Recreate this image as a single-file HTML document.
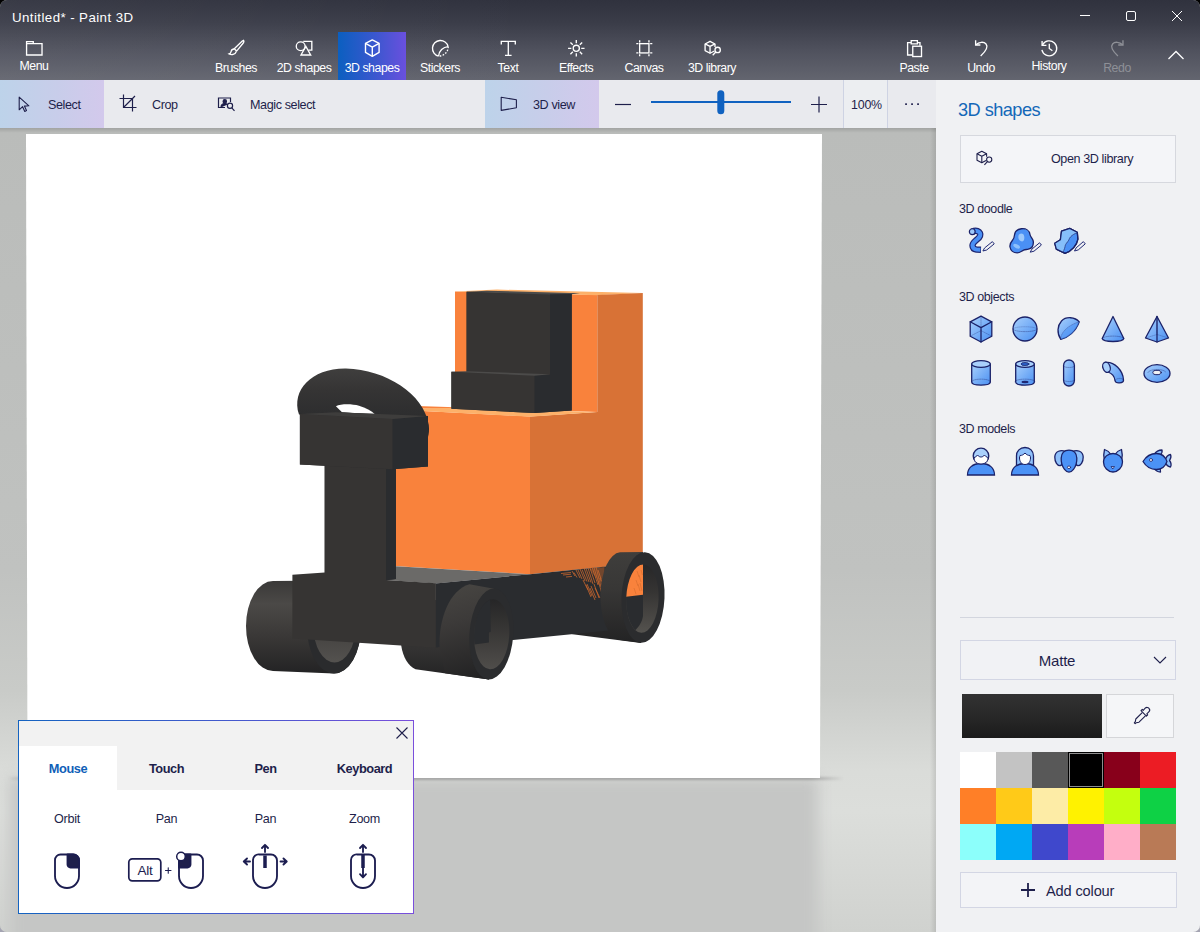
<!DOCTYPE html>
<html>
<head>
<meta charset="utf-8">
<title>Paint 3D</title>
<style>
*{box-sizing:border-box;margin:0;padding:0}
html,body{width:1200px;height:932px;overflow:hidden;background:linear-gradient(180deg,#000 50%,#a4a4b2 50%);font-family:"Liberation Sans",sans-serif;}
#app{position:absolute;left:0;top:0;width:1200px;height:932px;overflow:hidden;background:#b9bbb9;border-radius:7px}
.abs{position:absolute}
/* header */
#hdr{position:absolute;left:0;top:0;width:1200px;height:80px;background:linear-gradient(90deg,rgba(255,255,255,.045) 0%,rgba(255,255,255,0) 45%),linear-gradient(180deg,#30323e 0%,#3a3c48 28%,#50525e 64%,#63656f 100%);}
#title{position:absolute;left:12px;top:9.600px;font-size:13.3px;color:#fff;letter-spacing:.42px;white-space:nowrap}
.tb{position:absolute;top:32px;width:68px;height:48px;color:#fff;text-align:center}
.tb .lb{position:absolute;left:-10px;right:-10px;top:28px;font-size:12.3px;letter-spacing:-0.45px;line-height:16px;white-space:nowrap;text-align:center}
.tb svg{position:absolute;left:23.700px;top:5.600px;width:20.600px;height:20.600px;overflow:visible}
.tb.act{background:linear-gradient(90deg,#0b5fc0 0%,#3b57cf 55%,#6a50de 100%)}
.tb.dis{color:#8e9097}
/* sub toolbar */
#sub{position:absolute;left:0;top:80px;width:936px;height:48px;background:#e9eaee}
.sb{position:absolute;top:0;height:48px;font-size:12.6px;letter-spacing:-0.4px;color:#1e1f4b;white-space:nowrap}
.sel{background:linear-gradient(90deg,#bdd3ea 0%,#c8cdea 55%,#d3c9ec 100%)}
.sb span{position:absolute;top:17px;line-height:16px}
/* right panel */
#rp{position:absolute;left:936px;top:80px;width:264px;height:852px;background:#f0f1f3}
.sec{position:absolute;left:23px;font-size:12.5px;color:#1e1f4b;white-space:nowrap}
.pt{position:absolute;top:39px;line-height:18px;font-size:12.8px;font-weight:bold;letter-spacing:-0.45px;text-align:center;color:#1e1f4b;white-space:nowrap}
.ps{position:absolute;top:89px;line-height:18px;font-size:12.6px;letter-spacing:-0.3px;text-align:center;color:#1e1f4b;white-space:nowrap}
</style>
</head>
<body>
<div id="app">

<!-- WORKSPACE -->
<div id="ws" class="abs" style="left:0;top:128px;width:936px;height:804px;background:linear-gradient(180deg,#babcba 0%,#bdbfbd 30%,#c0c2c0 55%,#c9cbc8 70%,#dadcd9 80%,#dcdedb 85%,#d0d2cf 100%)"></div>
<div class="abs" style="left:0;top:128px;width:936px;height:5px;background:linear-gradient(180deg,rgba(0,0,0,.13),rgba(0,0,0,0))"></div>
<div class="abs" style="left:930px;top:128px;width:6px;height:804px;background:linear-gradient(90deg,rgba(0,0,0,0),rgba(0,0,0,.10))"></div>


<!-- CANVAS -->
<div class="abs" style="left:10px;top:778px;width:808px;height:170px;background:#c5c6c5;filter:blur(7px)"></div>
<div class="abs" style="left:8px;top:777px;width:836px;height:3px;background:linear-gradient(90deg,rgba(150,150,150,0) 0%,rgba(150,150,150,.8) 3%,rgba(150,150,150,.8) 96%,rgba(150,150,150,0) 100%);filter:blur(.8px)"></div>
<svg class="abs" style="left:0;top:128px;width:936px;height:804px" viewBox="0 128 936 804"><polygon points="26,134 822,134 820,778 27.500,778" fill="#ffffff"/></svg>
<svg class="abs" style="left:0;top:128px;width:936px;height:804px" viewBox="0 128 936 804">
<defs>
<linearGradient id="w1" x1="0" y1="581" x2="0" y2="673" gradientUnits="userSpaceOnUse"><stop offset="0" stop-color="#3a3938"/><stop offset=".25" stop-color="#4b4947"/><stop offset=".6" stop-color="#3a3837"/><stop offset="1" stop-color="#232324"/></linearGradient>
<linearGradient id="w2" x1="0" y1="585" x2="0" y2="680" gradientUnits="userSpaceOnUse"><stop offset="0" stop-color="#3f3e3c"/><stop offset=".3" stop-color="#403e3d"/><stop offset=".7" stop-color="#323131"/><stop offset="1" stop-color="#222223"/></linearGradient>
<linearGradient id="w3" x1="0" y1="552" x2="0" y2="643" gradientUnits="userSpaceOnUse"><stop offset="0" stop-color="#3f3e3c"/><stop offset=".4" stop-color="#383736"/><stop offset="1" stop-color="#232324"/></linearGradient>
<linearGradient id="hub" x1="0" y1="0" x2="0" y2="1"><stop offset="0" stop-color="#2c2c2d"/><stop offset=".6" stop-color="#454341"/><stop offset="1" stop-color="#54524f"/></linearGradient>
<linearGradient id="w2b" x1="450" y1="590" x2="475" y2="680" gradientUnits="userSpaceOnUse"><stop offset="0" stop-color="#464441"/><stop offset=".35" stop-color="#3c3a39"/><stop offset=".7" stop-color="#2e2d2d"/><stop offset="1" stop-color="#222223"/></linearGradient>
<linearGradient id="hub2" x1="0" y1="599" x2="0" y2="670" gradientUnits="userSpaceOnUse"><stop offset="0" stop-color="#262627"/><stop offset=".35" stop-color="#343332"/><stop offset=".75" stop-color="#454341"/><stop offset="1" stop-color="#504e4b"/></linearGradient>
<linearGradient id="hub3" x1="0" y1="564" x2="0" y2="633" gradientUnits="userSpaceOnUse"><stop offset="0" stop-color="#272728"/><stop offset=".4" stop-color="#353433"/><stop offset=".8" stop-color="#4a4845"/><stop offset="1" stop-color="#55534f"/></linearGradient>
<linearGradient id="arc" x1="0" y1="368" x2="0" y2="432" gradientUnits="userSpaceOnUse"><stop offset="0" stop-color="#403f3e"/><stop offset=".35" stop-color="#353434"/><stop offset="1" stop-color="#28292b"/></linearGradient>
</defs>
<!-- orange blocks -->
<polygon points="385,405 597.300,412 597.300,295 455,291.500 455,409 420,408.500 385,410" fill="#f9823c"/>
<polygon points="455,291.400 497,289.600 642.800,293 597.300,295.200" fill="#fdb16a"/>
<polygon points="597.300,295 642.800,293 642.800,563 530,574.200 530,416.500 597.300,412" fill="#d87236"/>
<polygon points="385,409 530,416.500 530,574.200 385,565.500" fill="#f9823c"/>
<polygon points="418,408.400 455,407.800 597.300,412 530,416.700 418,410.800" fill="#fdb16a"/>
<!-- seat -->
<polygon points="466.600,291.700 571.700,294 571.700,410.500 534.400,413 451.400,408.700 451.400,371.800 466.600,372" fill="#303031"/>
<polygon points="466.600,291.700 550,294.300 550,376 466.600,373" fill="#363433"/>
<polygon points="466.600,291.700 487,290.700 580,293.300 571.700,294.200 550,294.600" fill="#4a4a4a"/>
<polygon points="550,294.400 571.700,294 571.700,410.500 534.400,413 534.400,375.300 550,374.800" fill="#2a2c2f"/>
<polygon points="451.400,371.800 534.400,375.300 534.400,413 451.400,408.700" fill="#363433"/>
<polygon points="451.400,371.800 466.600,371.300 550,374.300 534.400,375.700" fill="#4c4b4a"/>
<!-- base -->
<polygon points="395.800,566.300 530,574.200 436,583.400 386,580" fill="#6b6a68"/>
<!-- wheel 2 under-base body -->
<path d="M400.800 640 L401.300 646 C403 657 408 666 415.500 669.200 L488.900 679.500 L488.900 600 L400.800 600z" fill="url(#w2)"/>
<!-- wheel 3 under-base body -->
<path d="M571 630 C571.200 632.500 571.600 633.600 572.500 634.200 L641 643 L641 620z" fill="url(#w3)"/>
<polygon points="435.300,583.400 530,574.200 650,562 650,626.600 435.300,647.600" fill="#2a2c2f"/>
<!-- scribbles -->
<polygon points="589,568.500 604.500,567 604.500,579 598,580 593,574" fill="#c9662c" opacity=".45"/>
<g stroke="#d06a2e" stroke-width=".8" opacity=".95"><path d="M563 575l8-.8M566 577l6-.6M574 572.500l3 5M578 570l4 9M582 569.500l5 12M586 568.500l5 14M590 568l5 15M594 567.500l5 17M583 580l5 10M587 584l5 12M591 586l5 12M595 588l5 10M598 570l4 12M600 578l3 12M561 573.500l10-1M572 571l3 5M576 570l4 8M580 569l5 12M584 568l5 14M588 568l5 16M592 567l6 18M596 567l5 20M586 585l5 12M590 588l5 12M594 584l5 14M598 580l4 14"/></g>
<!-- wheel 3 (back) body -->
<path d="M620 552.300 L643 552.100 L641 642.800 L618 639.800 A20.500 44 0 0 1 620 552.300z" fill="url(#w3)"/>
<!-- wheel 3 face -->
<ellipse cx="643" cy="597.500" rx="21.500" ry="45.400" transform="rotate(2.500 643 597.500)" fill="#2b2c2e"/>
<clipPath id="c3"><ellipse cx="642.400" cy="598.600" rx="16.200" ry="34.200" transform="rotate(2 642.400 598.600)"/></clipPath>
<g clip-path="url(#c3)"><rect x="620" y="560" width="50" height="80" fill="url(#hub3)"/><path d="M620 560 L643 556 L643 616 C642 623 637 630 630 634.500 L620 640z" fill="#2a2c2f"/><polygon points="620,560 643,556 643,594.800 626,596.800 620,598" fill="#f9823c"/><g stroke="#c9662c" stroke-width=".6" opacity=".8"><path d="M637 571l2 6M639 575l2 7M636 580l2 6M638 584l2 7M640 583l2 8M634 588l2 6M641 570l1.500 5"/></g></g>
<!-- wheel 1 -->
<path d="M273 581 L334 580.500 A27 46.500 0 0 1 334 673.500 L273 671 A27 45 0 0 1 273 581z" fill="url(#w1)"/>
<ellipse cx="334" cy="627" rx="27" ry="46.500" fill="#2a2b2d"/>
<ellipse cx="334.500" cy="627" rx="21" ry="35.500" fill="url(#hub)"/>
<!-- wheel 2 outer body -->
<path d="M439.500 647.300 C438.500 620 449 590 469.500 584.200 L494 588.700 L488.900 679.500 L445 673.300z" fill="url(#w2b)"/>
<ellipse cx="491.400" cy="634" rx="21.900" ry="45.500" transform="rotate(4 491.400 634)" fill="#2b2c2e"/>
<clipPath id="c2"><ellipse cx="491.700" cy="634.300" rx="17.600" ry="35" transform="rotate(3 491.700 634.300)"/></clipPath>
<g clip-path="url(#c2)"><rect x="470" y="595" width="45" height="80" fill="url(#hub2)"/><polygon points="470,595 490.200,598 490.800,631.800 488.900,632.600 488.900,642.600 474,644.600 470,645" fill="#2a2c2f"/></g>
<!-- base front + stem -->
<polygon points="324.700,464 395.900,468 395.900,579 386.200,580.200 324.700,575" fill="#303031"/>
<polygon points="292.400,574.700 324.700,572.500 324.700,464 386.200,468.500 386.200,580 435.800,583.300 435.800,647.700 292.400,638.600" fill="#363433"/>
<polygon points="386.200,468.500 395.900,468 395.900,579 386.200,580.200" fill="#2a2c2f"/>
<!-- handlebar arc -->
<path d="M299 414.500 C291 390 312 368 346 368.500 C386 369.500 424 394 428.800 425 C429.300 430 429 434 428 437 L428 418 L392 420z" fill="url(#arc)"/>
<path d="M335.900 406.200 C341 403.700 352 403.800 359 405.800 C366 407.800 371 410.500 375.500 414.700 L342 412.200z" fill="#ffffff"/>
<!-- handlebar box -->
<polygon points="299.900,414 336,412.300 428,416.100 428,466.600 392.700,469.200 299.900,464.400" fill="#2f2f30"/>
<polygon points="299.900,414 392.700,419 392.700,469.200 299.900,464.400" fill="#363433"/>
<polygon points="392.700,419 428,416 428,466.600 392.700,469.200" fill="#2a2c2f"/>
<polygon points="299.900,414 336,412.300 428,416.100 392.700,419.100" fill="#3e3d3c"/>
</svg>
<!-- POPUP -->
<div id="pop" class="abs" style="left:18px;top:720px;width:396px;height:194px;padding:1px;background:linear-gradient(90deg,#1463c0 0%,#4a58cf 60%,#7a4fdc 100%)">
 <div style="position:relative;width:394px;height:192px;background:#fff">
  <div class="abs" style="left:0;top:0;width:394px;height:68.600px;background:#f2f2f2"></div>
  <div class="abs" style="left:0;top:25px;width:98px;height:44px;background:#fff"></div>
  <svg class="abs" style="left:376px;top:5px;width:14px;height:14px" viewBox="0 0 14 14" stroke="#1e1f4b" stroke-width="1.1" fill="none"><path d="M1.500 1.500l11 11M12.500 1.500l-11 11"/></svg>
  <div class="pt" style="left:0;width:98px;color:#0f5fb8">Mouse</div>
  <div class="pt" style="left:98px;width:99px">Touch</div>
  <div class="pt" style="left:197px;width:99px">Pen</div>
  <div class="pt" style="left:296px;width:99px">Keyboard</div>
  <div class="ps" style="left:-1px;width:98px">Orbit</div>
  <div class="ps" style="left:98px;width:99px">Pan</div>
  <div class="ps" style="left:197px;width:99px">Pan</div>
  <div class="ps" style="left:296px;width:99px">Zoom</div>
  <svg class="abs" style="left:0;top:120px;width:394px;height:56px" viewBox="19 841 394 56" fill="none" stroke="#1c1d50" stroke-width="1.85" stroke-linecap="round" stroke-linejoin="round">
    <!-- mouse 1 -->
    <path d="M60.500 854.500h12.500a6 6 0 0 1 6 6v15.500a12 12 0 0 1-24 0v-16a5.500 5.500 0 0 1 5.500-5.500z"/>
    <path d="M67.500 854.500h6a5.500 5.500 0 0 1 5.500 5.500v7.500h-8.500a3 3 0 0 1-3-3z" fill="#1e1f4b"/>
    <!-- alt -->
    <rect x="128.800" y="858.800" width="32" height="22" rx="3.500" stroke-width="1.700"/>
    <path d="M165.500 870.500h5.500M168.250 867.800v5.500" stroke-width="1.100"/>
    <!-- mouse 2 -->
    <path d="M184 854.500h13a6 6 0 0 1 6 6v15.500a12 12 0 0 1-24 0v-16a5.500 5.500 0 0 1 5-5.500z"/>
    <path d="M179 860a5.500 5.500 0 0 1 5.500-5.500h6v10a3 3 0 0 1-3 3h-8.500z" fill="#1e1f4b"/>
    <circle cx="181" cy="856.500" r="4.300" fill="#fff" stroke-width="1.500"/>
    <!-- pan -->
    <path d="M259.500 854.500h11.500a6 6 0 0 1 6 6v15.500a12 12 0 0 1-24 0v-16a5.500 5.500 0 0 1 6.500-5.500z"/>
    <path d="M265 855.500v12.500" stroke-width="3.500" stroke-linecap="butt"/>
    <path d="M265 845v7M262 848l3-3.200 3 3.200M244 861.500h6M247 858.500l-3.200 3 3.200 3M280.500 861.500h6M283.500 858.500l3.200 3-3.200 3"/>
    <!-- zoom -->
    <path d="M357.500 854.500h11.500a6 6 0 0 1 6 6v15.500a12 12 0 0 1-24 0v-16a5.500 5.500 0 0 1 6.500-5.500z"/>
    <path d="M363 854.500v13.500" stroke-width="3.500" stroke-linecap="butt"/>
    <path d="M363 845v7M360 848l3-3.200 3 3.200M363 866v11M360 874.200l3 3.200 3-3.200"/>
  </svg>
  <div class="abs" style="left:110px;top:139px;width:32px;height:22px;line-height:22px;text-align:center;font-size:13.5px;letter-spacing:-0.2px;color:#1c1d50">Alt</div>
 </div>
</div>

<!-- HEADER -->
<div id="hdr">
  <div id="title">Untitled* - Paint 3D</div>
  <!-- window controls -->
  <svg class="abs" style="left:1070px;top:0;width:130px;height:32px" viewBox="0 0 130 32" fill="none" stroke="#fff" stroke-width="1">
    <path d="M10 15.5h10"/>
    <rect x="56.5" y="11.5" width="9" height="9" rx="1.5"/>
    <path d="M102 11l10 10M112 11l-10 10"/>
  </svg>
  <div class="tb" style="left:0"><svg viewBox="0 0 20 20" fill="none" stroke="#fff" stroke-width="1.3"><path d="M2.5 3.5h6.5v2h8.5v11h-15z M2.5 5.5h6.5"/></svg><div class="lb" style="top:26px">Menu</div></div>
  <div class="tb" style="left:202px"><svg viewBox="0 0 20 20" fill="none" stroke="#fff" stroke-width="1.3"><path d="M16.8 2.2c.9.9.7 1.8-.2 2.9l-6.3 7.6-2.3-2.2 7.100000000000001-6.8c.7-.7 1.1-1.300000000000001 1.7-1.5z"/><path d="M8 10.700000000000001c-1.5 0-2.700000000000001.8-3 2.2-.3 1.4-.7 2.1-2 2.600000000000001 2.2 1.2 5.9.9 7-2.4"/></svg><div class="lb">Brushes</div></div>
  <div class="tb" style="left:270px"><svg viewBox="0 0 20 20" fill="none" stroke="#fff" stroke-width="1.3"><circle cx="6.5" cy="8" r="4.3"/><path d="M9 3.2h8.3v8.6h-3.300000000000001"/><path d="M11.5 8.2l4.7 8.3h-9.4z"/></svg><div class="lb">2D shapes</div></div>
  <div class="tb act" style="left:338px"><svg viewBox="0 0 20 20" fill="none" stroke="#fff" stroke-width="1.35" stroke-linejoin="round"><path d="M10 1.8l6.6 3.4v8.8l-6.6 3.8-6.6-3.8v-8.8z"/><path d="M3.4 5.2l6.6 3.6 6.6-3.6M10 8.8v9"/></svg><div class="lb">3D shapes</div></div>
  <div class="tb" style="left:406px"><svg viewBox="0 0 20 20" fill="none" stroke="#fff" stroke-width="1.3"><path d="M17.6 8.3a7.7 7.7 0 1 0-9.3 9.3"/><path d="M17.6 8.3c-4.8.3-9 4.5-9.3 9.3" /><path d="M17.6 8.3c.6 4.400000000000001-3.700000000000001 9.3-9.3 9.3" stroke-dasharray="1.6 1.4"/></svg><div class="lb">Stickers</div></div>
  <div class="tb" style="left:474px"><svg viewBox="0 0 20 20" fill="none" stroke="#fff" stroke-width="1.3"><path d="M3.2 6.2v-3h13.6v3M10 3.2v13.6M6.8 16.8h6.4"/></svg><div class="lb">Text</div></div>
  <div class="tb" style="left:542px"><svg viewBox="0 0 20 20" fill="none" stroke="#fff" stroke-width="1.3"><circle cx="10" cy="10" r="3"/><path d="M10 2v3.2M10 14.8v3.2M2 10h3.2M14.8 10h3.2M4.3 4.3l2.3 2.3M13.4 13.4l2.3 2.3M4.3 15.7l2.3-2.3M13.4 6.6l2.3-2.3"/></svg><div class="lb">Effects</div></div>
  <div class="tb" style="left:610px"><svg viewBox="0 0 20 20" fill="none" stroke="#fff" stroke-width="1.3"><rect x="5.5" y="5.5" width="9" height="9"/><path d="M5.5 2.2v2.100M14.5 2.2v2.100M5.5 15.7v2.100M14.5 15.7v2.100M2.2 5.5h2.100M2.2 14.5h2.100M15.7 5.5h2.100M15.7 14.5h2.100"/></svg><div class="lb">Canvas</div></div>
  <div class="tb" style="left:678px"><svg viewBox="0 0 20 20" fill="none" stroke="#fff" stroke-width="1.3" stroke-linejoin="round"><path d="M12 12.6l-4.2 2.2-4.8-2.6v-6.4l4.8-2.600000000000001 4.8 2.600000000000001v3"/><path d="M3 5.8l4.8 2.4 4.8-2.4M7.800000000000001 8.2v6.6"/><circle cx="15.2" cy="11.6" r="2.6"/><path d="M13.4 13.6l-3 3.2"/></svg><div class="lb">3D library</div></div>
  <div class="tb" style="left:880px"><svg viewBox="0 0 20 20" fill="none" stroke="#fff" stroke-width="1.3"><path d="M7 4.5h-3.5v12h4.5"/><path d="M13 4.5h2.5v3"/><path d="M7 2.5h6v3.2h-6z"/><rect x="8.5" y="8" width="8.5" height="10"/></svg><div class="lb">Paste</div></div>
  <div class="tb" style="left:947px"><svg viewBox="0 0 20 20" fill="none" stroke="#fff" stroke-width="1.3"><path d="M4.5 2.2v4.6h4.600000000000001"/><path d="M4.8 6.6c3-3 7.7-3.2 9.8-.8 2.2 2.600000000000001.6 6.2-5.2 11.700000000000001"/></svg><div class="lb">Undo</div></div>
  <div class="tb" style="left:1015px"><svg viewBox="0 0 20 20" fill="none" stroke="#fff" stroke-width="1.3"><path d="M3 3v4.2h4.2"/><path d="M3.4 6.8a7.300000000000001 7.300000000000001 0 1 1-.6 4.8"/><path d="M10 5.5v4.7l3 2.2"/></svg><div class="lb" style="top:26px">History</div></div>
  <div class="tb dis" style="left:1083px"><svg viewBox="0 0 20 20" fill="none" stroke="#8e9097" stroke-width="1.3"><path d="M15.5 2.2v4.6h-4.600000000000001"/><path d="M15.2 6.6c-3-3-7.7-3.2-9.8-.8-2.2 2.600000000000001-.6 6.2 5.2 11.700000000000001"/></svg><div class="lb">Redo</div></div>
  <svg class="abs" style="left:1164px;top:46px;width:24px;height:16px" viewBox="0 0 24 16" fill="none" stroke="#fff" stroke-width="1.3"><path d="M4.5 13l7.5-7.5 7.5 7.5"/></svg>
</div>

<!-- SUB TOOLBAR -->
<div id="sub">
  <div class="sb sel" style="left:0;width:104px">
    <svg class="abs" style="left:14px;top:14px;width:20px;height:20px" viewBox="0 0 20 20" fill="none" stroke="#1e1f4b" stroke-width="1.1" stroke-linejoin="round"><path d="M5.2 3.2v12.6l3.4-3.1 2.2 4.7 1.7-.8-2.1-4.5 4.5-.3z"/></svg>
    <span style="left:48px">Select</span>
  </div>
  <div class="sb" style="left:104px;width:100px">
    <svg class="abs" style="left:14px;top:13px;width:20px;height:20px" viewBox="0 0 20 20" fill="none" stroke="#1e1f4b" stroke-width="1.2"><path d="M5.5 1.5v13h13M1.5 5.5h13v13M17 3L5.5 14.5"/></svg>
    <span style="left:48px">Crop</span>
  </div>
  <div class="sb" style="left:204px;width:130px">
    <svg class="abs" style="left:12px;top:14px;width:20px;height:20px" viewBox="0 0 20 20" fill="none" stroke="#1e1f4b" stroke-width="1.2"><path d="M9 13.5h-6.500000000000001v-9.5h12v4"/><circle cx="8.8" cy="7.4" r="1.7" fill="#1e1f4b"/><path d="M5 13.500000000000002c0-2.5 1.5-4 3.8-4 1.2 0 2 .4 2.700000000000001 1.1" fill="#1e1f4b"/><circle cx="14" cy="11.8" r="2.6"/><path d="M15.8 13.8l2.7 3"/></svg>
    <span style="left:46px">Magic select</span>
  </div>
  <div class="sb sel" style="left:485px;width:114px">
    <svg class="abs" style="left:14px;top:14px;width:20px;height:20px" viewBox="0 0 20 20" fill="none" stroke="#1e1f4b" stroke-width="1.1" stroke-linejoin="round"><path d="M2.2 3.2l15.2 2.6v8l-15.2 2.600000000000001z"/></svg>
    <span style="left:48px">3D view</span>
  </div>
  <svg class="abs" style="left:600px;top:0;width:240px;height:48px" viewBox="0 0 240 48" fill="none">
    <path d="M15 24.5h16" stroke="#1e1f4b" stroke-width="1.2"/>
    <path d="M51 22h140" stroke="#1062c0" stroke-width="1.8"/>
    <rect x="117.300" y="10.300" width="7" height="24" rx="3.500" fill="#1062c0"/>
    <path d="M211 24.5h16M219 16.5v16" stroke="#1e1f4b" stroke-width="1.2"/>
  </svg>
  <div class="abs" style="left:843px;top:0;width:45px;height:48px;border-left:1px solid #ced3e3;border-right:1px solid #ced3e3;background:#eceef1"></div>
  <span class="abs" style="left:843px;width:45px;top:16.600px;line-height:16px;text-align:center;font-size:12.4px;letter-spacing:-0.2px;padding-left:2px;color:#1e1f4b">100%</span>
  <svg class="abs" style="left:900px;top:18px;width:24px;height:12px" viewBox="0 0 24 12" fill="#1e1f4b"><rect x="5.200" y="5.300" width="1.700" height="1.700"/><rect x="11.2" y="5.300" width="1.700" height="1.700"/><rect x="17.2" y="5.300" width="1.700" height="1.700"/></svg>
</div>

<!-- RIGHT PANEL -->
<div id="rp">
  <div class="abs" style="left:22px;top:18px;font-size:18.2px;line-height:24px;color:#1468b8;letter-spacing:-0.55px;white-space:nowrap">3D shapes</div>
  <div class="abs" style="left:24px;top:55px;width:216px;height:48px;border:1px solid #d6d8de;background:#f4f5f8"></div>
  <svg class="abs" style="left:38px;top:68px;width:20px;height:20px;overflow:visible" viewBox="0 0 20 20" fill="none" stroke="#1e1f4b" stroke-width="1.1" stroke-linejoin="round"><path d="M12 12.6l-4.2 2.2-4.8-2.6v-6.4l4.8-2.600000000000001 4.8 2.600000000000001v3"/><path d="M3 5.8l4.8 2.4 4.8-2.4M7.800000000000001 8.2v6.6"/><circle cx="15.2" cy="11.6" r="2.6"/><path d="M13.4 13.6l-3 3.2"/></svg>
  <div class="abs" style="left:84px;width:144px;top:71px;line-height:16px;font-size:12.6px;letter-spacing:-0.4px;color:#1e1f4b;text-align:center;white-space:nowrap">Open 3D library</div>
  <div class="sec" style="top:121px;line-height:16px;letter-spacing:-0.4px">3D doodle</div>
  <div class="sec" style="top:209px;line-height:16px;letter-spacing:-0.4px">3D objects</div>
  <div class="sec" style="top:341px;line-height:16px;letter-spacing:-0.4px">3D models</div>
  <svg class="abs" style="width:0;height:0"><defs>
<linearGradient id="bg1" x1="0" y1="0" x2="1" y2="1"><stop offset="0" stop-color="#a9d0fc"/><stop offset="1" stop-color="#4a90f2"/></linearGradient>
<linearGradient id="bg2" x1="0" y1="0" x2="0" y2="1"><stop offset="0" stop-color="#8fc0fa"/><stop offset="1" stop-color="#4b92f6"/></linearGradient>
</defs></svg>
<svg class="abs" style="left:29px;top:145px;width:32px;height:32px;overflow:visible" viewBox="0 0 32 32" fill="url(#bg1)" stroke="#1b2268" stroke-width="1.3" stroke-linejoin="round" stroke-linecap="round"><path d="M7.250 6.670 C9 5.800 11 5.600 12.500 6.100 C15 7 15.800 9 15.100 10.800 C14.300 13 12.500 14 11 15.300 C9 17 7.400 18.500 7.500 20.500 C7.600 23 9.500 24.300 11.500 24.600 L16 24.750" fill="none" stroke="#1f2873" stroke-width="6.400" stroke-linecap="butt"/><path d="M7.250 6.670 C9 5.800 11 5.600 12.500 6.100 C15 7 15.800 9 15.100 10.800 C14.300 13 12.500 14 11 15.300 C9 17 7.400 18.500 7.500 20.500 C7.600 23 9.500 24.300 11.500 24.600 L15.400 24.750" fill="none" stroke="#4a90f5" stroke-width="4" stroke-linecap="butt"/><circle cx="7.250" cy="6.670" r="2.900" fill="#9cc8fb" stroke-width="1.200"/><path d="M18.30 25.90 L21.70 25.00 L29.22 18.87 L27.38 16.63 L19.86 22.75z" fill="#f0f1f4" stroke="#1f2873" stroke-width="1"/></svg>
<svg class="abs" style="left:73px;top:145px;width:32px;height:32px;overflow:visible" viewBox="0 0 32 32" fill="url(#bg1)" stroke="#1b2268" stroke-width="1.3" stroke-linejoin="round" stroke-linecap="round"><path d="M12.300 3.750 C17 3.200 20.500 5.500 21 9.500 C21.300 12 24 13.500 24.300 16.600 C24.600 20.500 22.500 23.500 19.300 24.200 C17.500 24.600 16 24.500 14.600 25.100 C12.500 26 11 27.900 8.200 27.900 C4.500 27.900 1.500 25.500 1 22 C.5 19 2 17 3.500 15.300 C5 13.600 5.300 12.500 5.500 10 C5.800 6.500 8 4.200 12.300 3.750z" fill="#4a90f5"/><path d="M9.500 10.500 C10 8.500 12.500 7.800 14 9 C15.500 10.200 15.800 14 14.500 15.800 C13.500 17 11.500 16.500 10.300 15 C9.300 13.700 9.200 12 9.500 10.500z" fill="#9cc8fb" stroke="none"/><ellipse cx="7.600" cy="21.200" rx="3.600" ry="1.900" transform="rotate(25 7.600 21.200)" fill="#8ec0fb" stroke="none"/><path d="M21.60 27.10 L24.99 26.18 L32.42 20.02 L30.58 17.78 L23.14 23.94z" fill="#f0f1f4" stroke="#1f2873" stroke-width="1"/></svg>
<svg class="abs" style="left:117px;top:145px;width:32px;height:32px;overflow:visible" viewBox="0 0 32 32" fill="url(#bg1)" stroke="#1b2268" stroke-width="1.3" stroke-linejoin="round" stroke-linecap="round"><path d="M8.500 6.100 L16.700 3.400 L24.300 7.250 L24.900 14.250 C24 20 19 26 12 28.300 L3.300 24.200 L1.750 18.300 L7.350 14.800z" fill="#4a90f5"/><path d="M8.500 6.100 L16.700 3.400 L24.300 7.250 L23.700 8 C20.500 9 17 11.500 16 14.500 C15 17 12.500 18.500 12 21.500 C11.700 23.500 10.500 26 10 27.300 L3.300 24.200 L1.750 18.300 L7.350 14.800z" fill="#86bffa" stroke="none"/><path d="M23.700 8 C20.500 9 17 11.500 16 14.500 C15 17 12.500 18.500 12 21.500 C11.700 23.500 10.500 26 10 27.300" fill="none" stroke-width=".7" stroke-dasharray="1 .9"/><path d="M8.500 6.100 L16.700 3.400 L24.300 7.250 L24.900 14.250 C24 20 19 26 12 28.300 L3.300 24.200 L1.750 18.300 L7.350 14.800z" fill="none"/><path d="M21.90 25.90 L25.27 24.90 L32.25 18.85 L30.35 16.65 L23.37 22.71z" fill="#f0f1f4" stroke="#1f2873" stroke-width="1"/></svg>
<svg class="abs" style="left:29px;top:233px;width:32px;height:32px;overflow:visible" viewBox="0 0 32 32" fill="url(#bg1)" stroke="#1b2268" stroke-width="1.3" stroke-linejoin="round" stroke-linecap="round"><path d="M16 3.200l10.800 5.600v14.400l-10.800 5.800-10.800-5.800v-14.400z"/><path d="M5.200 8.800l10.800 5.800 10.800-5.800M16 14.600v14.400" fill="none"/><path d="M16 3.200v11M5.200 23.200l10.800-5.600 10.800 5.600" fill="none" stroke-width=".5" stroke-dasharray="1 1" opacity=".6"/></svg>
<svg class="abs" style="left:73px;top:233px;width:32px;height:32px;overflow:visible" viewBox="0 0 32 32" fill="url(#bg1)" stroke="#1b2268" stroke-width="1.3" stroke-linejoin="round" stroke-linecap="round"><circle cx="16" cy="16" r="12"/><path d="M4 16c2 3.500 22 3.500 24 0" fill="none" stroke-width=".6" stroke-dasharray="1.200 1" opacity=".6"/><path d="M4 16c2-3 22-3 24 0" fill="none" stroke-width=".5" stroke-dasharray="1.200 1" opacity=".4"/></svg>
<svg class="abs" style="left:117px;top:233px;width:32px;height:32px;overflow:visible" viewBox="0 0 32 32" fill="url(#bg1)" stroke="#1b2268" stroke-width="1.3" stroke-linejoin="round" stroke-linecap="round"><path d="M26.200 8.900 C22 3.800 13 3.200 8.500 8 C4.500 12.500 3.500 20 7.800 26.300 C15 24.800 23 18.500 26.200 8.900z"/><path d="M7.800 26.300 C7.500 21 13 13 26.200 8.900" fill="none" stroke-width=".6" stroke-dasharray="1.200 1" opacity=".6"/><path d="M7.800 26.300 C7.500 21 13 13 26.200 8.900 C23 18.500 15 24.800 7.800 26.300z" fill="#4b92f6" stroke="none" opacity=".55"/></svg>
<svg class="abs" style="left:161px;top:233px;width:32px;height:32px;overflow:visible" viewBox="0 0 32 32" fill="url(#bg1)" stroke="#1b2268" stroke-width="1.3" stroke-linejoin="round" stroke-linecap="round"><path d="M16 3.500l10.800 22c-1 4-20.600 4-21.600 0z"/><path d="M5.200 25.500c2-3.200 19.600-3.200 21.600 0" fill="none" stroke-width=".6" stroke-dasharray="1.200 1" opacity=".6"/></svg>
<svg class="abs" style="left:205px;top:233px;width:32px;height:32px;overflow:visible" viewBox="0 0 32 32" fill="url(#bg1)" stroke="#1b2268" stroke-width="1.3" stroke-linejoin="round" stroke-linecap="round"><path d="M16 3.500l11.500 21.500-11.500 4-11.500-4z"/><path d="M16 3.500v25.500" fill="none"/><path d="M4.500 25l11.500-3.500 11.500 3.500M16 3.500v18" fill="none" stroke-width=".5" stroke-dasharray="1.200 1" opacity=".5"/></svg>
<svg class="abs" style="left:29px;top:277px;width:32px;height:32px;overflow:visible" viewBox="0 0 32 32" fill="url(#bg1)" stroke="#1b2268" stroke-width="1.3" stroke-linejoin="round" stroke-linecap="round"><path d="M6.700 7v18c0 4.200 18.600 4.200 18.600 0v-18z"/><ellipse cx="16" cy="7" rx="9.300" ry="3.400" fill="#a9d0fc"/><path d="M6.700 25c0-3.800 18.600-3.800 18.600 0" fill="none" stroke-width=".6" stroke-dasharray="1.200 1" opacity=".6"/></svg>
<svg class="abs" style="left:73px;top:277px;width:32px;height:32px;overflow:visible" viewBox="0 0 32 32" fill="url(#bg1)" stroke="#1b2268" stroke-width="1.3" stroke-linejoin="round" stroke-linecap="round"><path d="M6.700 7v18c0 4.200 18.600 4.200 18.600 0v-18z"/><ellipse cx="16" cy="7" rx="9.300" ry="3.400" fill="#a9d0fc"/><ellipse cx="16" cy="7" rx="4" ry="1.500" fill="#2a62c8" stroke-width=".8"/><ellipse cx="16" cy="25" rx="3.500" ry="1.200" fill="#1f2873" stroke="none"/><path d="M6 25c0-3.800 20-3.800 20 0" fill="none" stroke-width=".6" stroke-dasharray="1.200 1" opacity=".6"/></svg>
<svg class="abs" style="left:117px;top:277px;width:32px;height:32px;overflow:visible" viewBox="0 0 32 32" fill="url(#bg1)" stroke="#1b2268" stroke-width="1.3" stroke-linejoin="round" stroke-linecap="round"><rect x="10.600" y="3" width="10.800" height="26" rx="5.400"/><path d="M10.600 9c1 2 9.800 2 10.800 0M10.600 23c1 2 9.800 2 10.800 0" fill="none" stroke-width=".6" stroke-dasharray="1.200 1" opacity=".6"/></svg>
<svg class="abs" style="left:161px;top:277px;width:32px;height:32px;overflow:visible" viewBox="0 0 32 32" fill="url(#bg1)" stroke="#1b2268" stroke-width="1.3" stroke-linejoin="round" stroke-linecap="round"><path d="M8.500 5.500c9-1 17.500 8 18 17.500.2 3.500-8 4-8.500.5-.5-4-2.500-7-7-8.500z"/><ellipse cx="9.500" cy="10.300" rx="3.600" ry="5.200" transform="rotate(-20 9.500 10.300)" fill="#a9d0fc"/><path d="M18 23.500c1-2.500 7.500-2.800 8.500-.5" fill="none" stroke-width=".6" stroke-dasharray="1.200 1" opacity=".6"/></svg>
<svg class="abs" style="left:205px;top:277px;width:32px;height:32px;overflow:visible" viewBox="0 0 32 32" fill="url(#bg1)" stroke="#1b2268" stroke-width="1.3" stroke-linejoin="round" stroke-linecap="round"><ellipse cx="16" cy="16.500" rx="13" ry="8.800"/><ellipse cx="16" cy="15.500" rx="4.200" ry="2.200" fill="#f0f1f4" stroke-width="1"/><path d="M7 15.500c2-4 16-4 18 0" fill="none" stroke-width=".6" stroke-dasharray="1.200 1" opacity=".6"/></svg>
<svg class="abs" style="left:29px;top:365px;width:32px;height:32px;overflow:visible" viewBox="0 0 32 32" fill="url(#bg1)" stroke="#1b2268" stroke-width="1.3" stroke-linejoin="round" stroke-linecap="round"><path d="M2.500 30c0-7 5-11.500 13.500-11.500s13.500 4.500 13.500 11.500z" fill="#4b92f6" stroke-linejoin="miter"/><circle cx="16" cy="11" r="7.800" fill="#a9d0fc"/><path d="M9.200 12.500c-.5 2 .8 6.500 6.800 6.500s7.300-4.500 6.800-6.500c-1.500-.5-2.500-1.200-3.300-2.500-1 1.500-2.500 2-3.500 2-1 0-2.500-.5-3.500-2-.8 1.300-1.800 2-3.300 2.500z" fill="#fff" stroke-width="1"/></svg>
<svg class="abs" style="left:73px;top:365px;width:32px;height:32px;overflow:visible" viewBox="0 0 32 32" fill="url(#bg1)" stroke="#1b2268" stroke-width="1.3" stroke-linejoin="round" stroke-linecap="round"><path d="M7.500 22v-11c0-5 3.500-8.500 8.500-8.500s8.500 3.500 8.500 8.500v11z" fill="#8ec0fb"/><path d="M2.500 30c0-7 5-11.500 13.500-11.500s13.500 4.500 13.500 11.500z" fill="#4b92f6" stroke-linejoin="miter"/><path d="M10.500 13c0 3.500 2 6.500 5.500 6.500s5.500-3 5.500-6.500c0-1-.2-2-.5-2.500-2 0-3.500-.8-5-2.500-1.500 1.700-3 2.500-5 2.500-.3.500-.5 1.500-.5 2.500z" fill="#fff" stroke-width="1"/></svg>
<svg class="abs" style="left:117px;top:365px;width:32px;height:32px;overflow:visible" viewBox="0 0 32 32" fill="url(#bg1)" stroke="#1b2268" stroke-width="1.3" stroke-linejoin="round" stroke-linecap="round"><path d="M12.400 6.400 C8 4.500 2 6 1.800 12 C1.700 17 4.500 21 7.200 20.700 C9 20.500 9.300 18.500 9.300 17z M19.600 6.400 C24 4.500 30 6 30.200 12 C30.300 17 27.500 21 24.800 20.700 C23 20.500 22.700 18.500 22.700 17z" fill="#8ec0fb"/><path d="M16 5.100 C11.500 5.100 8.500 8 8.200 13 C8 17.500 9.300 21.500 11.500 24.300 C13 26.200 14.500 27.100 16 27.100 C17.500 27.100 19 26.200 20.500 24.300 C22.700 21.500 24 17.500 23.800 13 C23.500 8 20.500 5.100 16 5.100z" fill="#4b92f6"/><ellipse cx="16" cy="22.300" rx="1.600" ry="1.300" fill="#fff" stroke-width=".8"/></svg>
<svg class="abs" style="left:161px;top:365px;width:32px;height:32px;overflow:visible" viewBox="0 0 32 32" fill="url(#bg1)" stroke="#1b2268" stroke-width="1.3" stroke-linejoin="round" stroke-linecap="round"><path d="M7.500 16c-1-4-1-8 0-11.500 3 1 5 2.500 6.500 5zM24.500 16c1-4 1-8 0-11.500-3 1-5 2.500-6.500 5z" fill="#8ec0fb"/><path d="M16 8.500c5 0 9.500 3.500 9.500 8.500 0 5.500-4.500 10-9.500 10s-9.500-4.500-9.500-10c0-5 4.500-8.500 9.500-8.500z" fill="#4b92f6"/><path d="M14.500 21.500h3l-1.500 2.200z" fill="#fff" stroke-width=".8"/></svg>
<svg class="abs" style="left:205px;top:365px;width:32px;height:32px;overflow:visible" viewBox="0 0 32 32" fill="url(#bg1)" stroke="#1b2268" stroke-width="1.3" stroke-linejoin="round" stroke-linecap="round"><path d="M13 9.500c2-3 5-4.500 8-4.500.5 2-.5 4-2 5.500zM13 23c1.500 2.500 3.500 4 6.500 4 .3-1.800-.3-3.500-1.500-5z" fill="#8ec0fb"/><path d="M24.500 15c.5-3 2.500-5 5-5.500 1 2 0 4.500-1 6 1.500 2 2 4.500 1 6.500-2.500-.5-4.500-2.500-5-5z" fill="#8ec0fb"/><path d="M2 16.500c3-5 8-8 13.500-8 4.500 0 8.500 2.500 10.500 8-2 5.500-6 8-10.500 8-5.500 0-10.500-3-13.500-8z" fill="#4b92f6"/><circle cx="10" cy="15" r="1.500" fill="#fff" stroke-width=".8"/></svg>

  <div class="abs" style="left:24px;top:537px;width:214px;height:1px;background:#d3d6de"></div>
  <div class="abs" style="left:24px;top:560px;width:216px;height:40px;border:1px solid #d3d6e4;background:#f1f2f5"></div>
  <div class="abs" style="left:24px;width:194px;top:572px;line-height:18px;font-size:15px;letter-spacing:-0.2px;color:#1e1f4b;text-align:center">Matte</div>
  <svg class="abs" style="left:215px;top:573px;width:18px;height:14px" viewBox="0 0 18 14" fill="none" stroke="#1e1f4b" stroke-width="1.1"><path d="M3 4l6 6 6-6"/></svg>
  <div class="abs" style="left:26px;top:614px;width:140px;height:44px;background:linear-gradient(180deg,#323232 0%,#282828 50%,#1b1b1b 100%)"></div>
  <div class="abs" style="left:170px;top:614px;width:68px;height:44px;border:1px solid #d5d6d9;background:#f5f6f8"></div>
  <svg class="abs" style="left:196px;top:626px;width:20px;height:20px" viewBox="0 0 20 20" fill="none" stroke="#1e1f4b" stroke-width="1.1" stroke-linejoin="round"><path d="M13.2 2.2c1.2-1.2 3-.9 3.800000000000001.1.9 1 .9 2.5-.2 3.600000000000001l-2 2 .9.9-1.300000000000001 1.300000000000001-5.4-5.4 1.300000000000001-1.300000000000001.9.9z"/><path d="M10.2 6.6l-6.4 6.4-.5 2.600000000000001-1 1.2.9.9 1.2-1 2.600000000000001-.5 6.400000000000001-6.400000000000001"/></svg>
  <div class="abs" style="left:24px;top:672px;width:36px;height:36px;background:#ffffff"></div><div class="abs" style="left:60px;top:672px;width:36px;height:36px;background:#c3c3c3"></div><div class="abs" style="left:96px;top:672px;width:36px;height:36px;background:#585858"></div><div class="abs" style="left:132px;top:672px;width:36px;height:36px;background:#000000"></div><div class="abs" style="left:168px;top:672px;width:36px;height:36px;background:#88001b"></div><div class="abs" style="left:204px;top:672px;width:36px;height:36px;background:#ec1c24"></div><div class="abs" style="left:24px;top:708px;width:36px;height:36px;background:#ff7f27"></div><div class="abs" style="left:60px;top:708px;width:36px;height:36px;background:#ffca18"></div><div class="abs" style="left:96px;top:708px;width:36px;height:36px;background:#fdeca6"></div><div class="abs" style="left:132px;top:708px;width:36px;height:36px;background:#fff200"></div><div class="abs" style="left:168px;top:708px;width:36px;height:36px;background:#c4ff0e"></div><div class="abs" style="left:204px;top:708px;width:36px;height:36px;background:#0ed145"></div><div class="abs" style="left:24px;top:744px;width:36px;height:36px;background:#8cfffb"></div><div class="abs" style="left:60px;top:744px;width:36px;height:36px;background:#00a8f3"></div><div class="abs" style="left:96px;top:744px;width:36px;height:36px;background:#3f48cc"></div><div class="abs" style="left:132px;top:744px;width:36px;height:36px;background:#b83dba"></div><div class="abs" style="left:168px;top:744px;width:36px;height:36px;background:#ffaec8"></div><div class="abs" style="left:204px;top:744px;width:36px;height:36px;background:#b97a56"></div><div class="abs" style="left:133px;top:673px;width:34px;height:34px;border:1px solid #8e8e8e"></div>
  <div class="abs" style="left:24px;top:792px;width:217px;height:36px;border:1px solid #d3d6e4;background:#f3f4f7"></div>
  <svg class="abs" style="left:84px;top:802px;width:16px;height:16px" viewBox="0 0 16 16" stroke="#1e1f4b" stroke-width="1.8" fill="none"><path d="M8 1v14M1 8h14"/></svg>
  <div class="abs" style="left:110px;top:802px;line-height:18px;font-size:14.6px;letter-spacing:-0.15px;color:#1e1f4b;white-space:nowrap">Add colour</div>
</div>

</div>
</body>
</html>
